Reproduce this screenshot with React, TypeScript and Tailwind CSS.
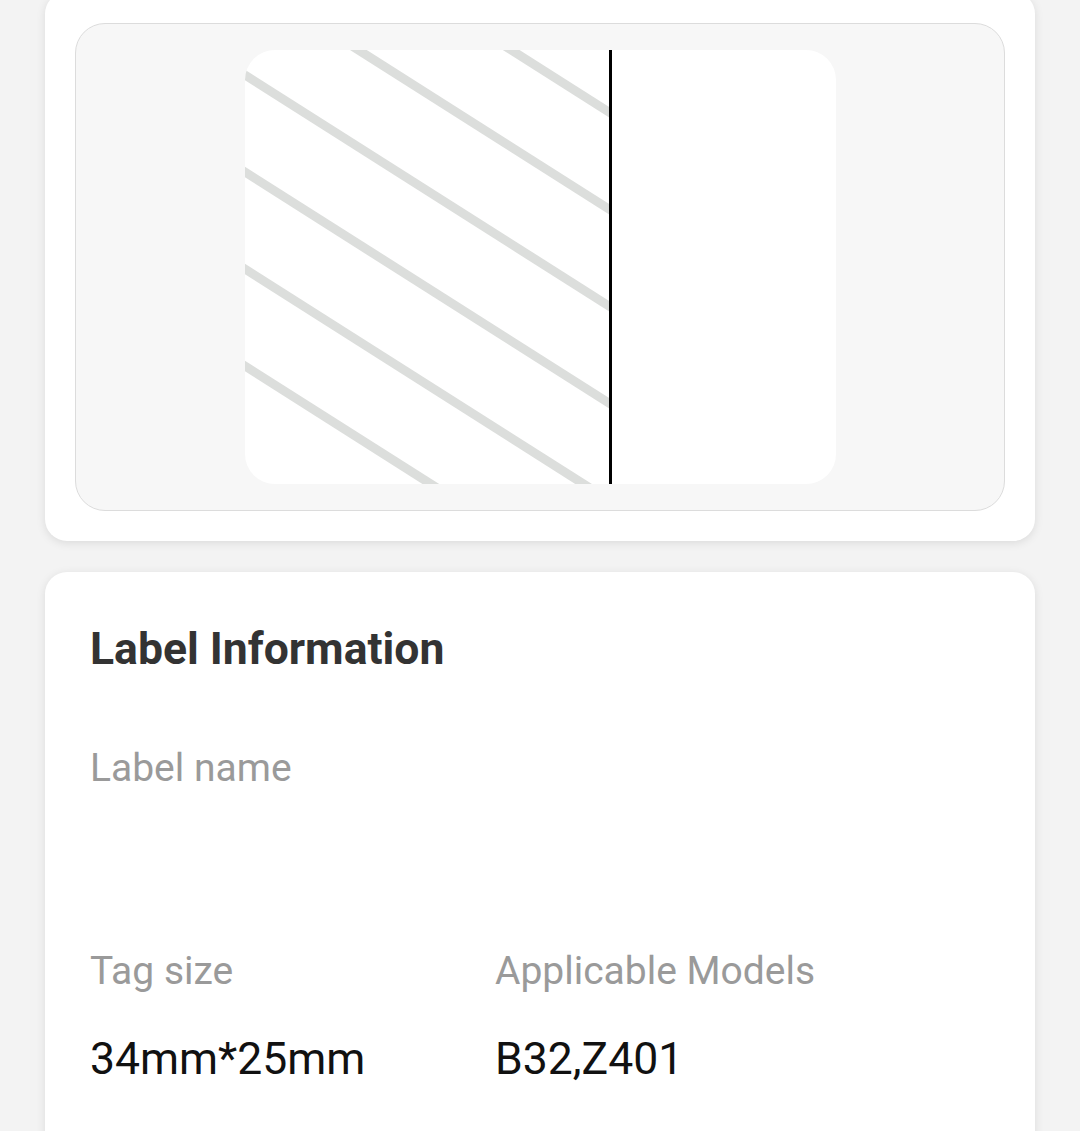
import React from "react";

// stripe offsets (y at x=0) for the preview hatch, slope ~0.635
const stripes = [-169, -72, 25, 122, 219, 316];

function LabelPreview() {
  return (
    <div className="w-[591px] h-[434px] rounded-[30px] bg-white overflow-hidden">
      <svg width="591" height="434" viewBox="0 0 591 434">
        <defs>
          <clipPath id="left-half">
            <rect x="0" y="0" width="365" height="434" />
          </clipPath>
        </defs>
        <g clipPath="url(#left-half)" stroke="#dcdedc" strokeWidth="9">
          {stripes.map((b) => (
            <line key={b} x1={-10} y1={b - 6.35} x2={380} y2={b + 0.635 * 380} />
          ))}
        </g>
        <rect x="364" y="0" width="3" height="434" fill="#000" />
      </svg>
    </div>
  );
}

function Field({ label, value }: { label: string; value?: string }) {
  return (
    <div>
      <div className="text-[39px] leading-[46px] text-[#9a9a9a]">{label}</div>
      <div className="mt-[39px] text-[44.5px] leading-[52px] text-[#111]">
        {value ?? "\u00a0"}
      </div>
    </div>
  );
}

export default function App() {
  return (
    <div
      className="min-h-screen bg-[#f3f3f3] px-[45px] overflow-hidden"
      style={{ fontFamily: "Roboto, 'Noto Sans', sans-serif" }}
    >
      {/* preview card, top edge scrolled off */}
      <div className="-mt-[8px] bg-white rounded-[22px] shadow-[0_2px_10px_rgba(0,0,0,0.10)] pt-[31px] px-[30px] pb-[30px]">
        <div className="bg-[#f7f7f7] border border-[#dcdcdc] rounded-[30px] py-[26px] flex justify-center">
          <LabelPreview />
        </div>
      </div>

      {/* label information */}
      <div className="mt-[31px] bg-white rounded-t-[22px] shadow-[0_2px_10px_rgba(0,0,0,0.10)] pt-[50px] pl-[45px] pr-[46px] pb-[60px]">
        <h1 className="text-[44.5px] leading-[54px] font-bold text-[#333]">
          Label Information
        </h1>

        <div className="mt-[69px] text-[39px] leading-[46px] text-[#9a9a9a]">
          Label name
        </div>
        <div className="h-[157px]" />

        <div className="grid grid-cols-[405px_1fr]">
          <Field label="Tag size" value="34mm*25mm" />
          <Field label="Applicable Models" value="B32,Z401" />
        </div>
      </div>
    </div>
  );
}
